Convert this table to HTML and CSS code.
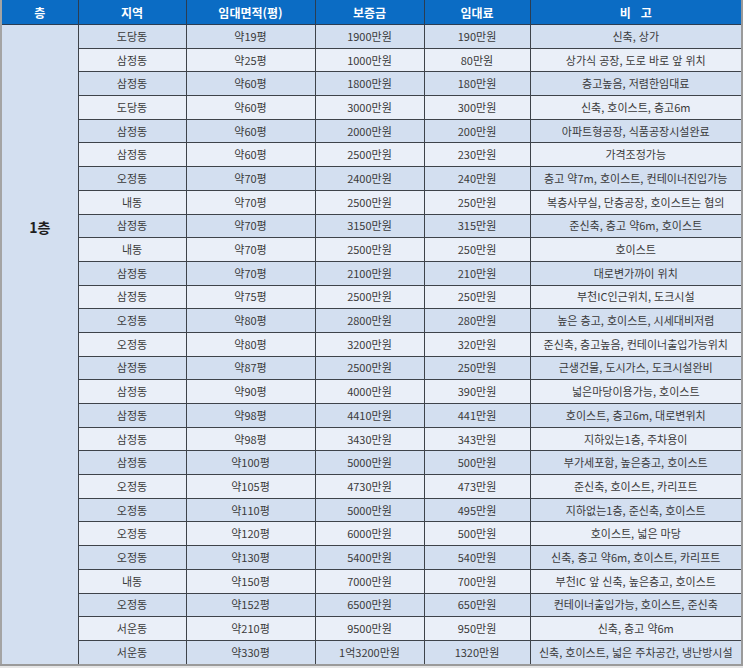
FILE: index.html
```html
<!DOCTYPE html>
<html lang="ko">
<head>
<meta charset="utf-8">
<title>임대 목록</title>
<link rel="stylesheet" href="styles.css">
</head>
<body>
<table class="list">
  <colgroup>
    <col class="c-floor"><col class="c-area"><col class="c-size"><col class="c-dep"><col class="c-rent"><col class="c-note">
  </colgroup>
  <thead>
    <tr><th>층</th><th>지역</th><th>임대면적(평)</th><th>보증금</th><th>임대료</th><th>비&nbsp;&nbsp;&nbsp;고</th></tr>
  </thead>
  <tbody>
    <tr><td class="floor" rowspan="27">1층</td><td>도당동</td><td>약19평</td><td>1900만원</td><td>190만원</td><td>신축, 상가</td></tr>
    <tr><td>삼정동</td><td>약25평</td><td>1000만원</td><td>80만원</td><td>상가식 공장, 도로 바로 앞 위치</td></tr>
    <tr><td>삼정동</td><td>약60평</td><td>1800만원</td><td>180만원</td><td>층고높음, 저렴한임대료</td></tr>
    <tr><td>도당동</td><td>약60평</td><td>3000만원</td><td>300만원</td><td>신축, 호이스트, 층고6m</td></tr>
    <tr><td>삼정동</td><td>약60평</td><td>2000만원</td><td>200만원</td><td>아파트형공장, 식품공장시설완료</td></tr>
    <tr><td>삼정동</td><td>약60평</td><td>2500만원</td><td>230만원</td><td>가격조정가능</td></tr>
    <tr><td>오정동</td><td>약70평</td><td>2400만원</td><td>240만원</td><td>층고 약7m, 호이스트, 컨테이너진입가능</td></tr>
    <tr><td>내동</td><td>약70평</td><td>2500만원</td><td>250만원</td><td>복층사무실, 단층공장, 호이스트는 협의</td></tr>
    <tr><td>삼정동</td><td>약70평</td><td>3150만원</td><td>315만원</td><td>준신축, 층고 약6m, 호이스트</td></tr>
    <tr><td>내동</td><td>약70평</td><td>2500만원</td><td>250만원</td><td>호이스트</td></tr>
    <tr><td>삼정동</td><td>약70평</td><td>2100만원</td><td>210만원</td><td>대로변가까이 위치</td></tr>
    <tr><td>삼정동</td><td>약75평</td><td>2500만원</td><td>250만원</td><td>부천IC인근위치, 도크시설</td></tr>
    <tr><td>오정동</td><td>약80평</td><td>2800만원</td><td>280만원</td><td>높은 층고, 호이스트, 시세대비저렴</td></tr>
    <tr><td>오정동</td><td>약80평</td><td>3200만원</td><td>320만원</td><td>준신축, 층고높음, 컨테이너출입가능위치</td></tr>
    <tr><td>삼정동</td><td>약87평</td><td>2500만원</td><td>250만원</td><td>근생건물, 도시가스, 도크시설완비</td></tr>
    <tr><td>삼정동</td><td>약90평</td><td>4000만원</td><td>390만원</td><td>넓은마당이용가능, 호이스트</td></tr>
    <tr><td>삼정동</td><td>약98평</td><td>4410만원</td><td>441만원</td><td>호이스트, 층고6m, 대로변위치</td></tr>
    <tr><td>삼정동</td><td>약98평</td><td>3430만원</td><td>343만원</td><td>지하있는1층, 주차용이</td></tr>
    <tr><td>삼정동</td><td>약100평</td><td>5000만원</td><td>500만원</td><td>부가세포함, 높은층고, 호이스트</td></tr>
    <tr><td>오정동</td><td>약105평</td><td>4730만원</td><td>473만원</td><td>준신축, 호이스트, 카리프트</td></tr>
    <tr><td>오정동</td><td>약110평</td><td>5000만원</td><td>495만원</td><td>지하없는1층, 준신축, 호이스트</td></tr>
    <tr><td>오정동</td><td>약120평</td><td>6000만원</td><td>500만원</td><td>호이스트, 넓은 마당</td></tr>
    <tr><td>오정동</td><td>약130평</td><td>5400만원</td><td>540만원</td><td>신축, 층고 약6m, 호이스트, 카리프트</td></tr>
    <tr><td>내동</td><td>약150평</td><td>7000만원</td><td>700만원</td><td>부천IC 앞 신축, 높은층고, 호이스트</td></tr>
    <tr><td>오정동</td><td>약152평</td><td>6500만원</td><td>650만원</td><td>컨테이너출입가능, 호이스트, 준신축</td></tr>
    <tr><td>서운동</td><td>약210평</td><td>9500만원</td><td>950만원</td><td>신축, 층고 약6m</td></tr>
    <tr><td>서운동</td><td>약330평</td><td>1억3200만원</td><td>1320만원</td><td>신축, 호이스트, 넓은 주차공간, 냉난방시설</td></tr>
  </tbody>
</table>
</body>
</html>
```
FILE: styles.css
```css
html, body {
  margin: 0;
  padding: 0;
  background: #e6e6e6;
}

.list {
  width: 743px;
  border-collapse: collapse;
  table-layout: fixed;
  font-family: "Noto Sans CJK KR", "Noto Sans", sans-serif;
  font-size: 11px;
  color: #3a3a3a;
  border-left: 2px solid #a4a4a4;
  border-right: 2px solid #9a9a9a;
  border-bottom: 2px solid #9a9a9a;
}

.c-floor { width: 77px; }
.c-area { width: 108px; }
.c-size { width: 129px; }
.c-dep { width: 109px; }
.c-rent { width: 106px; }
.c-note { width: 212px; }

.list th {
  background: #0b6cc4;
  color: #ffffff;
  font-weight: 700;
  font-size: 12px;
  height: 24px;
  padding: 0;
  border: 1px solid #2b3d52;
  border-top: none;
  text-align: center;
}

.list td {
  height: 22.7px;
  padding: 0;
  text-align: center;
  border: 1px solid #3e434a;
  background: #eaeff8;
  white-space: nowrap;
  line-height: 1;
}

.list tbody tr:nth-child(odd) td {
  background: #d3dff0;
}

.list td.floor {
  background: #d3dff1;
  font-size: 14px;
  font-weight: 700;
  color: #1e1e1e;
  vertical-align: top;
  padding-top: 195px;
}
```
